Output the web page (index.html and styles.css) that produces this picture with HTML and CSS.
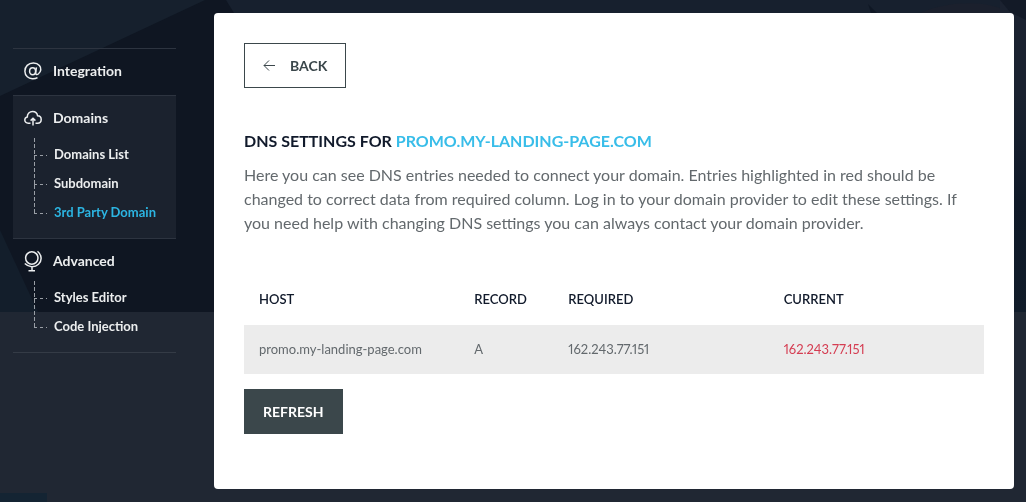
FILE: index.html
```html
<!DOCTYPE html>
<html lang="en">
<head>
<meta charset="utf-8">
<meta name="viewport" content="width=device-width, initial-scale=1">
<title>DNS settings</title>
<link rel="stylesheet" href="styles.css">
</head>
<body>
<svg class="backdrop" viewBox="0 0 1026 502" preserveAspectRatio="none" aria-hidden="true">
  <defs>
    <linearGradient id="edge" x1="0" y1="0" x2="0" y2="1">
      <stop offset="0" stop-color="#1b2230"/>
      <stop offset=".3" stop-color="#1a2230"/>
      <stop offset=".65" stop-color="#0f1927"/>
      <stop offset="1" stop-color="#111c2a"/>
    </linearGradient>
  </defs>
  <rect width="1026" height="502" fill="#0f1622"/>
  <path d="M0 0H205L0 96Z" fill="#16202d"/>
  <path d="M226 0H1000V13H234Z" fill="#17202e"/>
  <path d="M920 13C950 0 990 0 1010 13Z" fill="#1b202d"/>
  <path d="M868 4L877 13H871Z" fill="#0f1724"/>
  <path d="M1000 0H1026V312H1000Z" fill="url(#edge)"/>
  <path d="M1000 0H1026V20L1010 12Z" fill="#131a27"/>
  <path d="M0 230L38 312H0Z" fill="#131e2b"/>
  <path d="M0 312H1026V502H0Z" fill="#202733"/>
  <path d="M0 493H47V502H0Z" fill="#142433"/>
</svg>
<div class="layout">
  <nav class="sidebar" aria-label="Settings">
    <section class="group">
      <a class="group-title" href="#">
        <svg class="icon" viewBox="0 0 18 18" aria-hidden="true"><ellipse cx="8.600" cy="9.200" rx="3" ry="3.500"/><path d="M12.400 5.300L11.600 10.800C11.500 12.600 12.900 13 14.300 12C17.200 9.800 17.600 6.200 15.400 3.600C12.500.2 6.500.1 3.200 3.400C0 6.600.2 12 3.300 14.800C6 17.300 10.500 17.500 13.500 15.600"/></svg>
        Integration
      </a>
    </section>
    <section class="group active">
      <a class="group-title" href="#">
        <svg class="icon" viewBox="0 0 18 18" aria-hidden="true"><path d="M6.500 14.200H4.200C2.200 14.200.8 12.800.8 11C.8 9.400 1.800 8.200 3.300 7.900C3.200 4.800 5.600 2.600 8.600 2.600C11.300 2.600 13.200 4.400 13.600 6.800C15.800 6.900 17.200 8.400 17.200 10.500C17.200 12.600 15.700 14.200 13.600 14.200H11.500M9 16.500V9.500M6.600 11.600L9 9.200L11.400 11.600"/></svg>
        Domains
      </a>
      <ul class="tree">
        <li><a href="#">Domains List</a></li>
        <li><a href="#">Subdomain</a></li>
        <li><a class="current" href="#" aria-current="page">3rd Party Domain</a></li>
      </ul>
    </section>
    <section class="group">
      <a class="group-title" href="#">
        <svg class="icon tall" viewBox="0 0 18 22" aria-hidden="true"><circle cx="7.800" cy="8" r="6.200"/><path d="M13.500 1.200C18 5 18.200 10.800 14.500 14.200C10.800 17.600 4.500 17.500.8 13.600M8 16.500V20.500M4.500 20.700H11"/></svg>
        Advanced
      </a>
      <ul class="tree">
        <li><a href="#">Styles Editor</a></li>
        <li><a href="#">Code Injection</a></li>
      </ul>
    </section>
  </nav>
  <main class="card">
    <button class="button outline" type="button">
      <svg class="arrow" viewBox="0 0 12 12" aria-hidden="true"><path d="M12 5.500H1M6 .5L1 5.500L6 10.500"/></svg>
      BACK
    </button>
    <h1>DNS SETTINGS FOR <span>PROMO.MY-LANDING-PAGE.COM</span></h1>
    <p class="intro">Here you can see DNS entries needed to connect your domain. Entries highlighted in red should be changed to correct data from required column. Log in to your domain provider to edit these settings. If you need help with changing DNS settings you can always contact your domain provider.</p>
    <table>
      <colgroup><col><col class="narrow"><col><col></colgroup>
      <thead><tr><th>HOST</th><th>RECORD</th><th>REQUIRED</th><th>CURRENT</th></tr></thead>
      <tbody><tr><td>promo.my-landing-page.com</td><td>A</td><td>162.243.77.151</td><td class="wrong">162.243.77.151</td></tr></tbody>
    </table>
    <button class="button solid" type="button">REFRESH</button>
  </main>
</div>
</body>
</html>
```
FILE: styles.css
```css
* { box-sizing: border-box; }

body {
  margin: 0;
  min-height: 100vh;
  background: #202733;
  color: #63696d;
  font: 16px/24px Lato, "Open Sans", sans-serif;
}

a { color: inherit; text-decoration: none; }

.backdrop {
  position: fixed;
  inset: 0;
  z-index: -1;
  width: 100%;
  height: 100%;
}

.layout {
  display: flex;
  gap: 38px;
  min-height: 100vh;
  padding: 13px 12px 13px 13px;
}

.sidebar {
  flex: 0 0 163px;
  margin-top: 35px;
  color: #eceeef;
  font-weight: 700;
}

.group {
  padding-bottom: 11px;
  border-top: 1px solid #2d3440;
}

.group:first-child { padding-bottom: 2px; }
.group:last-child { border-bottom: 1px solid #343b46; }
.group.active { background: #1b222e; }

.group-title {
  display: flex;
  align-items: center;
  gap: 11px;
  height: 44px;
  padding-left: 11px;
  font-size: 14px;
}

.icon {
  width: 18px;
  height: 18px;
  fill: none;
  stroke: currentColor;
  stroke-width: 1.5;
}

.icon.tall { height: 22px; }

.tree {
  margin: 0;
  padding: 0 0 0 21px;
  list-style: none;
  font-size: 13px;
  line-height: 29px;
}

.tree li {
  position: relative;
  padding-left: 20px;
  white-space: nowrap;
}

.tree li::before {
  content: "";
  position: absolute;
  left: 0;
  top: -13px;
  width: 13px;
  height: 29px;
  background:
    repeating-linear-gradient(to bottom, #9a9fa6 0 4px, transparent 4px 6px) left top / 1px 100% no-repeat,
    repeating-linear-gradient(to right, #9a9fa6 0 3px, transparent 3px 6px) left bottom / 100% 1px no-repeat;
}

.tree li:first-child::before { top: -2px; height: 18px; }
.tree .current { color: #2cb5e2; }

.card {
  flex: 1;
  min-width: 0;
  padding: 30px;
  border-radius: 4px;
  background: #fff;
}

.button {
  display: inline-flex;
  align-items: center;
  height: 45px;
  padding: 0 18px;
  border: 1px solid #3b474b;
  font: 700 14px/20px Lato, sans-serif;
  cursor: pointer;
}

.outline { gap: 15px; background: #fff; color: #3b474b; }
.solid { margin-top: 15px; background: #3b474b; color: #fff; }

.arrow {
  width: 12px;
  height: 12px;
  fill: none;
  stroke: currentColor;
  stroke-width: 1;
}

h1 {
  margin: 41px 0 10px;
  color: #111a2b;
  font-size: 16px;
  font-weight: 700;
  line-height: 24px;
}

h1 span { color: #38bde9; }

.intro { margin: 0; }

table {
  width: 100%;
  margin-top: 40px;
  border-collapse: collapse;
  table-layout: fixed;
  font-size: 13px;
  line-height: 19px;
  font-variant-numeric: proportional-nums;
}

.narrow { width: 94px; }

th, td { padding: 15px; text-align: left; font-weight: 400; }
th { padding-bottom: 16px; color: #111a2b; font-weight: 600; }
td { background: #ececec; }
td.wrong { color: #d53d52; }
```
